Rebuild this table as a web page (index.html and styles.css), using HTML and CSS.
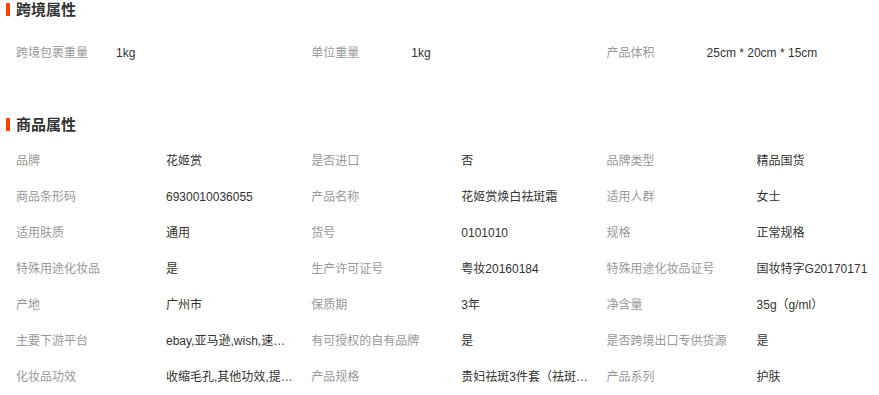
FILE: index.html
```html
<!DOCTYPE html>
<html lang="zh-CN">
<head>
<meta charset="utf-8">
<title>商品属性</title>
<link rel="stylesheet" href="styles.css">
</head>
<body>
<section class="block block-cross">
  <h2 class="block-title">跨境属性</h2>
  <ul class="attr-list attr-list-cross">
    <li class="attr"><span class="attr-name">跨境包裹重量</span><span class="attr-value">1kg</span></li>
    <li class="attr"><span class="attr-name">单位重量</span><span class="attr-value">1kg</span></li>
    <li class="attr"><span class="attr-name">产品体积</span><span class="attr-value">25cm * 20cm * 15cm</span></li>
  </ul>
</section>
<section class="block block-goods">
  <h2 class="block-title">商品属性</h2>
  <ul class="attr-list attr-list-goods">
    <li class="attr"><span class="attr-name">品牌</span><span class="attr-value">花姬赏</span></li>
    <li class="attr"><span class="attr-name">是否进口</span><span class="attr-value">否</span></li>
    <li class="attr"><span class="attr-name">品牌类型</span><span class="attr-value">精品国货</span></li>
    <li class="attr"><span class="attr-name">商品条形码</span><span class="attr-value">6930010036055</span></li>
    <li class="attr"><span class="attr-name">产品名称</span><span class="attr-value">花姬赏焕白祛斑霜</span></li>
    <li class="attr"><span class="attr-name">适用人群</span><span class="attr-value">女士</span></li>
    <li class="attr"><span class="attr-name">适用肤质</span><span class="attr-value">通用</span></li>
    <li class="attr"><span class="attr-name">货号</span><span class="attr-value">0101010</span></li>
    <li class="attr"><span class="attr-name">规格</span><span class="attr-value">正常规格</span></li>
    <li class="attr"><span class="attr-name">特殊用途化妆品</span><span class="attr-value">是</span></li>
    <li class="attr"><span class="attr-name">生产许可证号</span><span class="attr-value">粤妆20160184</span></li>
    <li class="attr"><span class="attr-name">特殊用途化妆品证号</span><span class="attr-value">国妆特字G20170171</span></li>
    <li class="attr"><span class="attr-name">产地</span><span class="attr-value">广州市</span></li>
    <li class="attr"><span class="attr-name">保质期</span><span class="attr-value">3年</span></li>
    <li class="attr"><span class="attr-name">净含量</span><span class="attr-value">35g（g/ml）</span></li>
    <li class="attr"><span class="attr-name">主要下游平台</span><span class="attr-value">ebay,亚马逊,wish,速卖通,独立站,LAZADA</span></li>
    <li class="attr"><span class="attr-name">有可授权的自有品牌</span><span class="attr-value">是</span></li>
    <li class="attr"><span class="attr-name">是否跨境出口专供货源</span><span class="attr-value">是</span></li>
    <li class="attr"><span class="attr-name">化妆品功效</span><span class="attr-value">收缩毛孔,其他功效,提亮肤色,祛斑</span></li>
    <li class="attr"><span class="attr-name">产品规格</span><span class="attr-value">贵妇祛斑3件套（祛斑霜+精华+面膜）</span></li>
    <li class="attr"><span class="attr-name">产品系列</span><span class="attr-value">护肤</span></li>
  </ul>
</section>
</body>
</html>
```

FILE: styles.css
```css
html, body {
  margin: 0;
  padding: 0;
  background: #fff;
  overflow: hidden;
}
body {
  font-family: "Liberation Sans", "Noto Sans CJK SC", sans-serif;
  font-size: 12px;
  color: #333;
}
.block-title {
  position: relative;
  margin: 0;
  padding-left: 16px;
  height: 20px;
  line-height: 20px;
  font-size: 15px;
  font-weight: bold;
  color: #333;
}
.block-title::before {
  content: "";
  position: absolute;
  left: 6px;
  top: 3px;
  width: 4px;
  height: 13px;
  background: #ff4400;
}
.block-goods {
  margin-top: 44px;
}
.attr-list {
  list-style: none;
  margin: 0;
  padding: 0 0 0 16px;
  display: grid;
  grid-template-columns: 295.3px 295.3px 1fr;
}
.attr-list-cross {
  margin-top: 15px;
}
.attr-list-goods {
  margin-top: 8px;
}
.attr {
  display: flex;
  height: 36px;
  line-height: 36px;
  white-space: nowrap;
  overflow: hidden;
}
.attr-name {
  flex: none;
  color: #999;
}
.attr-list-cross .attr-name {
  width: 100px;
}
.attr-list-goods .attr-name {
  width: 150px;
}
.attr-value {
  color: #333;
  max-width: 130px;
  overflow: hidden;
  text-overflow: ellipsis;
}
.attr-list-cross .attr-value {
  max-width: none;
}
```
